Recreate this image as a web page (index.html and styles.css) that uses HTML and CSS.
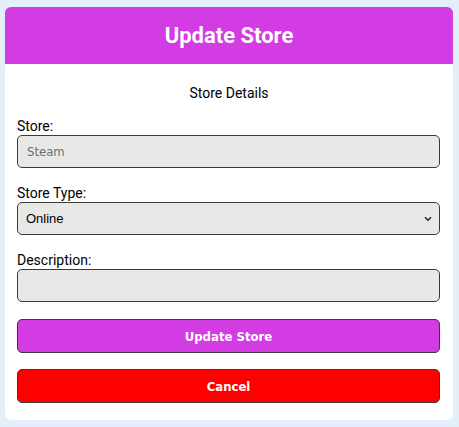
FILE: index.html
```html
<!DOCTYPE html>
<html lang="en">
<head>
<meta charset="utf-8">
<title>Update Store</title>
<link rel="stylesheet" href="styles.css">
</head>
<body>
<div class="card">
  <div class="card-header">
    <h1 class="title">Update Store</h1>
  </div>
  <form class="card-body">
    <h2 class="section-title">Store Details</h2>
    <div class="field">
      <label class="label" for="store">Store:</label>
      <input class="control" id="store" type="text" placeholder="Steam">
    </div>
    <div class="field">
      <label class="label" for="type">Store Type:</label>
      <div class="select-wrap">
        <select class="control select" id="type">
          <option>Online</option>
          <option>Physical</option>
        </select>
        <svg class="chevron" width="8" height="6" viewBox="0 0 8 6"><path d="M1 1.2 L4 4.2 L7 1.2" fill="none" stroke="#222" stroke-width="1.6"/></svg>
      </div>
    </div>
    <div class="field">
      <label class="label" for="desc">Description:</label>
      <input class="control" id="desc" type="text">
    </div>
    <button class="btn btn-primary" type="button">Update Store</button>
    <button class="btn btn-danger" type="button">Cancel</button>
  </form>
</div>
</body>
</html>
```
FILE: styles.css
```css
html, body {
  margin: 0;
  padding: 0;
}
body {
  background: #e3f0fc;
  padding: 7px 6px 8px 5px;
  font-family: Roboto, "Liberation Sans", sans-serif;
}
.card {
  width: 448px;
}
.card-header {
  background: #d33be3;
  height: 57px;
  border-radius: 6px 6px 0 0;
  display: flex;
  align-items: center;
  justify-content: center;
}
.title {
  margin: 0;
  color: #fff;
  font-size: 22px;
  font-weight: 700;
  line-height: 1;
}
.card-body {
  background: #fff;
  border-radius: 3px 3px 6px 6px;
  padding: 21px 12px 17px 12px;
  display: flex;
  flex-direction: column;
}
.section-title {
  margin: 0 0 17px 0;
  text-align: center;
  font-size: 14px;
  font-weight: 400;
  color: #000;
  line-height: 16px;
}
.field {
  display: flex;
  flex-direction: column;
  margin-bottom: 17px;
}
.label {
  font-size: 14px;
  color: #000;
  line-height: 17px;
}
.control {
  box-sizing: border-box;
  width: 423px;
  height: 33px;
  margin: 0;
  border: 1px solid #3a3a3a;
  border-radius: 5px;
  background: #e8e9e7;
  padding: 0 9px;
  font-family: "DejaVu Sans", Verdana, sans-serif;
  font-stretch: condensed;
  font-size: 13px;
  color: #000;
  outline: none;
}
.control::placeholder {
  color: #6f6f6f;
}
.select-wrap {
  position: relative;
}
.select {
  appearance: none;
  -webkit-appearance: none;
  font-family: "Liberation Sans", Arial, sans-serif;
  font-stretch: normal;
  font-size: 13px;
  padding: 0 8px;
}
.chevron {
  position: absolute;
  right: 9px;
  top: 14px;
  pointer-events: none;
}
.btn {
  box-sizing: border-box;
  width: 423px;
  height: 34px;
  border: 1px solid #3a3a3a;
  border-radius: 5px;
  color: #fff;
  font-family: "DejaVu Sans", Verdana, sans-serif;
  font-stretch: condensed;
  font-weight: 700;
  font-size: 13px;
  cursor: pointer;
}
.btn-primary {
  background: #d33be3;
  margin-bottom: 16px;
}
.btn-danger {
  background: #ff0000;
}
```
